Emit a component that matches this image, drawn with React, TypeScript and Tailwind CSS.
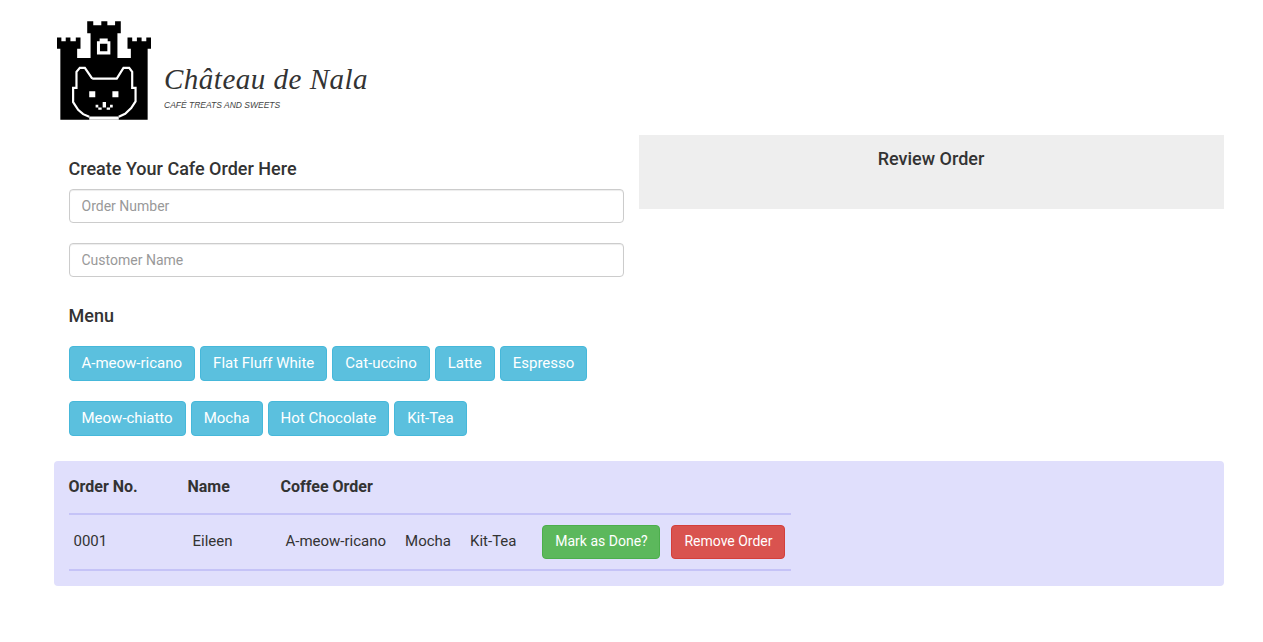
const menuRows = [
  ["A-meow-ricano", "Flat Fluff White", "Cat-uccino", "Latte", "Espresso"],
  ["Meow-chiatto", "Mocha", "Hot Chocolate", "Kit-Tea"],
];

function Logo() {
  return (
    <svg viewBox="22 18 280 297" className="w-[94px] h-[100px] shrink-0">
      {/* castle */}
      <path
        fill="#000"
        d="M22 70H35V81H48V70H62V81H78V70H92V103H82V131H122V57H112V21H130V33H154V21H172V33H195V21H212V57H202V131H242V103H232V70H246V81H260V70H274V81H288V70H302V103H292V315H32V103H22Z"
      />
      {/* window */}
      <path fill="#fff" fillRule="evenodd" d="M149 73H173V81H181V120H141V81H149ZM150 88V111H172V88Z" />
      {/* cat */}
      <path
        fill="none"
        stroke="#fff"
        strokeWidth="6.5"
        d="M127 192L105 160H90L80 172V220H70V262L85 285L100 298L118 306M206 306L225 297L243 280L256 260V220H246V172L237 160H220L200 192H127"
      />
      <path
        fill="#fff"
        d="M118 305H206V315H118ZM118 230H136V248H118ZM187 230H205V248H187ZM158 262H168V270H158ZM137 270H145V278H137ZM145 278H155V285H145ZM158 270H168V278H158ZM170 278H180V285H170ZM180 270H188V278H180Z"
      />
    </svg>
  );
}

function MenuButton({ label }: { label: string }) {
  return (
    <button className="h-[35px] px-3 rounded border border-[#46b8da] bg-[#5bc0de] text-white text-[15px]">
      {label}
    </button>
  );
}

export default function App() {
  return (
    <div className="min-h-screen bg-white text-[#333] font-['Roboto',sans-serif] pl-[53.5px] pt-5">
      <header className="flex items-end h-[115px] pl-[3.5px] pb-[15px] gap-[13px]">
        <Logo />
        <div className="mb-[9px]">
          <div className="font-['Liberation_Serif',serif] italic text-[29px] leading-8 tracking-[0.5px]">Château de Nala</div>
          <div className="font-['Liberation_Sans',sans-serif] italic text-[8.5px] leading-3 mt-[4px] text-[#444]">CAFÉ TREATS AND SWEETS</div>
        </div>
      </header>

      <div className="grid grid-cols-[585px_585px]">
        <section className="px-[15px] pt-[23px]">
          <h2 className="text-[18px] font-medium leading-[22px]">Create Your Cafe Order Here</h2>
          <input
            placeholder="Order Number"
            className="block w-full h-[34px] mt-[9px] px-3 text-sm bg-white border border-[#ccc] rounded shadow-[inset_0_1px_1px_rgba(0,0,0,0.075)] placeholder:text-[#999]"
          />
          <input
            placeholder="Customer Name"
            className="block w-full h-[34px] mt-5 px-3 text-sm bg-white border border-[#ccc] rounded shadow-[inset_0_1px_1px_rgba(0,0,0,0.075)] placeholder:text-[#999]"
          />
          <h2 className="text-[18px] font-medium leading-[22px] mt-[28px]">Menu</h2>
          <div className="mt-[19px] flex flex-col gap-5">
            {menuRows.map((row) => (
              <div key={row[0]} className="flex gap-[5px]">
                {row.map((item) => (
                  <MenuButton key={item} label={item} />
                ))}
              </div>
            ))}
          </div>
        </section>
        <section className="h-[74px] bg-[#eee] pt-[13px] text-center">
          <h2 className="text-[18px] font-medium leading-[22px]">Review Order</h2>
        </section>
      </div>

      <section className="w-[1170px] h-[125px] mt-[25px] bg-[#e0dffc] rounded pl-[15px]">
        <div className="w-[722px]">
          <div className="flex h-[54px] items-center border-b-2 border-[#c5c3f7] text-[16px] font-bold">
            <div className="w-[119px]">Order No.</div>
            <div className="w-[93px]">Name</div>
            <div>Coffee Order</div>
          </div>
          <div className="flex h-[56px] items-center border-b-2 border-[#c5c3f7] text-[15px]">
            <div className="w-[119px] pl-[5px] mb-[2px]">0001</div>
            <div className="w-[93px] pl-[5px] mb-[2px]">Eileen</div>
            <div className="flex gap-[19px] pl-[5px] mb-[2px]">
              <span>A-meow-ricano</span>
              <span>Mocha</span>
              <span>Kit-Tea</span>
            </div>
            <div className="flex gap-[11px] ml-[26px]">
              <button className="h-[34px] w-[118px] pb-[2px] rounded border border-[#4cae4c] bg-[#5cb85c] text-white text-sm">
                Mark as Done?
              </button>
              <button className="h-[34px] w-[114px] pb-[2px] rounded border border-[#d43f3a] bg-[#d9534f] text-white text-sm">
                Remove Order
              </button>
            </div>
          </div>
        </div>
      </section>
    </div>
  );
}
